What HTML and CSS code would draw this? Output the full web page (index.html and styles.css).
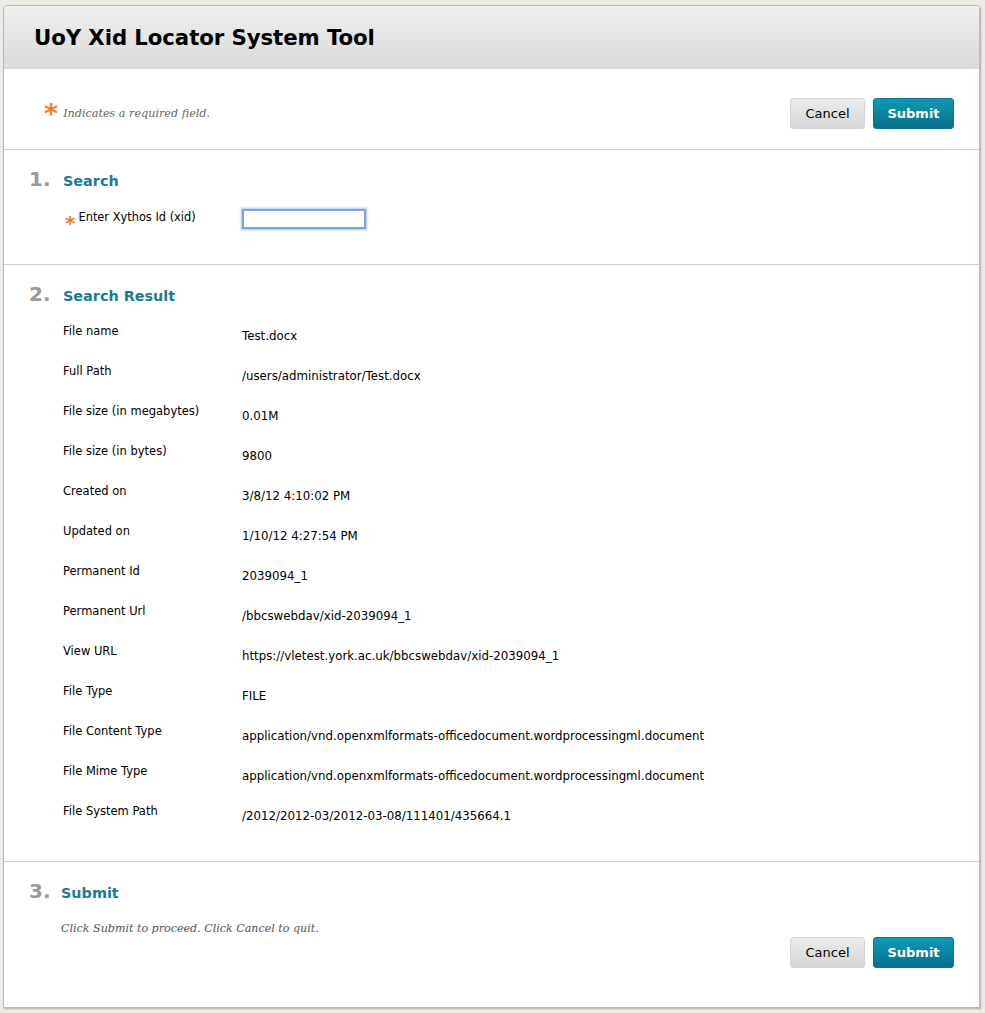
FILE: index.html
```html
<!DOCTYPE html>
<html>
<head>
<meta charset="utf-8">
<link rel="stylesheet" href="styles.css">
</head>
<body>
<div class="panel">
  <div class="header"><h1>UoY Xid Locator System Tool</h1></div>
  <div class="topbar">
    <p class="required"><span class="star">*</span> Indicates a required field.</p>
    <div class="buttons">
      <button class="btn cancel">Cancel</button>
      <button class="btn submit">Submit</button>
    </div>
  </div>

  <div class="section s1">
    <h2 class="step"><span class="num">1.</span><span class="title">Search</span></h2>
    <div class="field">
      <label class="flabel"><span class="star small">*</span>Enter Xythos Id (xid)</label>
      <input class="input" type="text">
    </div>
  </div>

  <div class="section s2">
    <h2 class="step"><span class="num">2.</span><span class="title">Search Result</span></h2>
    <div class="rows">
      <div class="row"><span class="lbl">File name</span><span class="val">Test.docx</span></div>
      <div class="row"><span class="lbl">Full Path</span><span class="val">/users/administrator/Test.docx</span></div>
      <div class="row"><span class="lbl">File size (in megabytes)</span><span class="val">0.01M</span></div>
      <div class="row"><span class="lbl">File size (in bytes)</span><span class="val">9800</span></div>
      <div class="row"><span class="lbl">Created on</span><span class="val">3/8/12 4:10:02 PM</span></div>
      <div class="row"><span class="lbl">Updated on</span><span class="val">1/10/12 4:27:54 PM</span></div>
      <div class="row"><span class="lbl">Permanent Id</span><span class="val">2039094_1</span></div>
      <div class="row"><span class="lbl">Permanent Url</span><span class="val">/bbcswebdav/xid-2039094_1</span></div>
      <div class="row"><span class="lbl">View URL</span><span class="val">https://vletest.york.ac.uk/bbcswebdav/xid-2039094_1</span></div>
      <div class="row"><span class="lbl">File Type</span><span class="val">FILE</span></div>
      <div class="row"><span class="lbl">File Content Type</span><span class="val">application/vnd.openxmlformats-officedocument.wordprocessingml.document</span></div>
      <div class="row"><span class="lbl">File Mime Type</span><span class="val">application/vnd.openxmlformats-officedocument.wordprocessingml.document</span></div>
      <div class="row"><span class="lbl">File System Path</span><span class="val">/2012/2012-03/2012-03-08/111401/435664.1</span></div>
    </div>
  </div>

  <div class="section s3">
    <h2 class="step"><span class="num">3.</span><span class="title">Submit</span></h2>
    <p class="instr">Click Submit to proceed. Click Cancel to quit.</p>
    <div class="buttons bottom">
      <button class="btn cancel">Cancel</button>
      <button class="btn submit">Submit</button>
    </div>
  </div>
</div>
</body>
</html>
```

FILE: styles.css
```css
html, body {
  margin: 0;
  padding: 0;
}
body {
  background: #eeebe4;
  font-family: "DejaVu Sans", "Liberation Sans", sans-serif;
  color: #000;
  padding: 5px 4px 5px 3px;
}
.panel {
  background: #fff;
  border: 1px solid #b9b9b9;
  border-radius: 4px 4px 0 0;
  box-shadow: 1px 1px 2px rgba(0,0,0,0.25);
  width: 977px;
  height: 1003px;
  box-sizing: border-box;
  overflow: hidden;
}
.header {
  height: 63px;
  background: linear-gradient(#efefef, #dadada);
  display: flex;
  align-items: center;
  padding-left: 30px;
}
.header h1 {
  margin: 0;
  font-size: 21.3px;
  font-weight: bold;
  letter-spacing: -0.1px;
}
.topbar {
  height: 81px;
  box-sizing: border-box;
  border-bottom: 1px solid #cfcfcf;
  display: flex;
  align-items: center;
  justify-content: space-between;
  padding: 0 25px 0 40px;
}
.required {
  margin: 9px 0 0 0;
  font-family: "DejaVu Serif", "Liberation Serif", serif;
  font-style: italic;
  font-size: 11.2px;
  color: #666;
  display: flex;
  align-items: center;
}
.star {
  color: #f47c20;
  font-family: "DejaVu Sans", sans-serif;
  font-style: normal;
  font-weight: bold;
  font-size: 27px;
  line-height: 1;
  margin-right: 5px;
  position: relative;
  top: 0px;
}
.star.small {
  font-size: 20px;
  margin-right: 3px;
  top: 4px;
}
.buttons {
  display: flex;
  gap: 8px;
  margin-top: 8px;
}
.btn {
  height: 31px;
  border-radius: 3px;
  font-family: "DejaVu Sans", sans-serif;
  font-size: 13px;
  padding: 0;
  cursor: pointer;
}
.cancel {
  width: 75px;
  border: 1px solid #d4d4d4;
  background: linear-gradient(#ececec, #d6d6d6);
  color: #000;
}
.submit {
  width: 81px;
  border: 1px solid #0b7390;
  background: linear-gradient(#0e9ab6, #04708b);
  color: #fff;
  font-weight: bold;
}
.section {
  border-bottom: 1px solid #cfcfcf;
  padding: 0 0 0 25px;
  box-sizing: border-box;
}
.step {
  margin: 0;
  display: flex;
  align-items: baseline;
}
.num {
  font-size: 20px;
  font-weight: bold;
  color: #9a9a9a;
  width: 34px;
}
.title {
  font-size: 14.4px;
  font-weight: bold;
  color: #1a7b96;
}
.s1 {
  height: 115px;
  padding-top: 17px;
}
.field {
  display: flex;
  align-items: flex-start;
  margin-top: 18px;
  padding-left: 36px;
}
.flabel {
  font-size: 11.4px;
  width: 177px;
  display: flex;
  align-items: flex-start;
  line-height: 16px;
}
.input {
  width: 124px;
  height: 20px;
  box-sizing: border-box;
  border: 2px solid #7ea7d6;
  box-shadow: 0 0 2px 1px rgba(110, 160, 220, 0.6);
  margin-top: 0;
  outline: none;
}
.s2 {
  height: 597px;
  padding-top: 17px;
}
.rows {
  padding-left: 34px;
  margin-top: 17px;
}
.row {
  display: flex;
  height: 40px;
  line-height: 16px;
}
.lbl {
  width: 179px;
  flex: none;
  font-size: 11.5px;
}
.val {
  padding-top: 5px;
  font-size: 11.8px;
}
.s3 {
  border-bottom: none;
  padding-top: 17px;
  padding-left: 25px;
  padding-right: 25px;
}
.s3 .num {
  width: 32px;
}
.instr {
  margin: 19px 0 0 32px;
  font-family: "DejaVu Serif", "Liberation Serif", serif;
  font-style: italic;
  font-size: 11.1px;
  color: #555;
}
.buttons.bottom {
  justify-content: flex-end;
  margin-top: 2px;
}
```
